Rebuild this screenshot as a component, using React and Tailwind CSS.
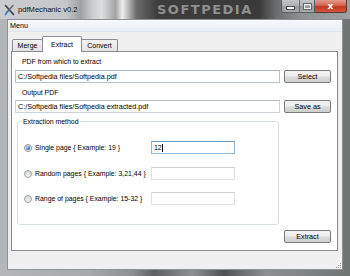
export default function App() {
  const btn =
    "h-[13px] w-[47px] flex items-center justify-center rounded-[2px] border border-[#7b7b7b] bg-[linear-gradient(180deg,#f4f4f4_0%,#ececec_48%,#dcdcdc_52%,#cfcfcf_100%)] text-[7.2px] leading-none text-black";
  return (
    <div className="w-[350px] h-[276px] overflow-hidden flex flex-col font-['Liberation_Sans',Arial,sans-serif] text-black bg-[linear-gradient(90deg,#b3b7ba_0%,#a6aaad_25%,#8c9093_38%,#5d6062_44%,#8e9294_55%,#505355_64%,#8d9093_76%,#6e7472_100%)]">
      {/* title bar */}
      <div className="h-[19px] shrink-0 flex items-start relative bg-[linear-gradient(90deg,#c9cdd0_0%,#c3c7ca_19%,#9ea2a5_23%,#c6c9cb_26%,#dcdedf_29%,#a3a3a3_33%,#eeeeee_35%,#6a6a6a_39%,#3d3d3d_45%,#3a3a3a_74%,#6b6d6e_79%,#8e9193_86%,#9ea1a3_100%)]">
        <div className="w-[18px] h-[19px] flex items-center justify-center">
          <svg width="11" height="12" viewBox="0 0 11 12">
            <path d="M1.5 1.5 L9.5 10.5" stroke="#3a3f46" strokeWidth="1.6" strokeLinecap="round" />
            <path d="M9 1.5 L3.5 7.5" stroke="#5c6670" strokeWidth="1.4" strokeLinecap="round" />
            <path d="M3.5 7.5 L1.5 10.5" stroke="#2b7fd0" strokeWidth="1.6" strokeLinecap="round" />
          </svg>
        </div>
        <span className="text-[7.6px] leading-[19px] text-[#111]">pdfMechanic v0.2</span>
        <span className="absolute left-[157px] top-[2px] text-[13px] leading-[15px] font-bold tracking-[1.5px] text-[#8f8f8f] font-['DejaVu_Sans',sans-serif]">
          SOFTPEDIA
        </span>
        <div className="ml-auto mr-[3px] flex items-start">
          <div className="h-[13px] w-[34px] flex rounded-bl-[3px] border border-t-0 border-[#5a5e61] bg-[linear-gradient(180deg,#c1c5c8_0%,#aeb2b5_50%,#94989b_51%,#a6aaad_100%)]">
            <div className="w-[18px] h-full flex items-center justify-center border-r border-[#6a6e71]">
              <div className="w-[7px] h-[2px] bg-white mt-[4px] outline outline-1 outline-[#555]" />
            </div>
            <div className="flex-1 h-full flex items-center justify-center">
              <div className="w-[7px] h-[5px] border border-[#eee] outline outline-1 outline-[#666]" />
            </div>
          </div>
          <div className="h-[13px] w-[32px] flex items-center justify-center rounded-br-[3px] border border-l-0 border-t-0 border-[#5a3a35] bg-[linear-gradient(180deg,#e59a8c_0%,#d66350_45%,#c2361f_55%,#d5553c_100%)]">
            <span className="text-[9px] leading-none font-bold text-white font-['DejaVu_Sans',sans-serif]">x</span>
          </div>
        </div>
      </div>

      {/* client */}
      <div className="relative mx-[7px] h-[251px] shrink-0 flex flex-col bg-[#f0f0f0] border border-[#8e9297]">
        {/* menu bar */}
        <div className="h-[12px] shrink-0 flex items-center bg-[linear-gradient(180deg,#f6f8fc_0%,#e9eef6_100%)] border-b border-[#dfe5ee]">
          <span className="pl-[2px] text-[7.2px] leading-none">Menu</span>
        </div>

        {/* tabs */}
        <div className="mt-[4px] ml-[4px] h-[15px] flex items-end relative z-10">
          <div className="h-[12px] w-[31px] flex items-center justify-center border border-b-0 border-[#898c95] rounded-t-[2px] bg-[linear-gradient(180deg,#f3f3f3_0%,#e3e3e3_100%)] text-[7px] leading-none">
            Merge
          </div>
          <div className="h-[16px] w-[40px] -mb-[1px] -ml-px flex items-center justify-center border border-b-0 border-[#898c95] rounded-t-[2px] bg-white text-[7px] leading-none">
            Extract
          </div>
          <div className="h-[12px] w-[37px] -ml-px flex items-center justify-center border border-b-0 border-[#898c95] rounded-t-[2px] bg-[linear-gradient(180deg,#f3f3f3_0%,#e3e3e3_100%)] text-[7px] leading-none">
            Convert
          </div>
        </div>

        {/* panel */}
        <div className="ml-[3px] w-[327px] h-[200px] flex flex-col bg-white border border-[#898c95] text-[6.9px] leading-[9px]">
          <div className="mt-[5px] pl-[10px]">PDF from which to extract</div>
          <div className="mt-[4px] flex items-center">
            <div className="ml-[3px] w-[265px] h-[13px] flex items-center pl-[2px] text-[7.2px] border border-[#b4c4d6] border-t-[#a6b6ca]">
              C:/Softpedia files/Softpedia.pdf
            </div>
            <div className={"ml-[4px] " + btn}>Select</div>
          </div>
          <div className="mt-[5px] pl-[10px]">Output PDF</div>
          <div className="mt-[3px] flex items-center">
            <div className="ml-[3px] w-[265px] h-[13px] flex items-center pl-[2px] text-[7.2px] border border-[#c9d3de] border-t-[#b3bcc6]">
              C:/Softpedia files/Softpedia extracted.pdf
            </div>
            <div className={"ml-[4px] " + btn}>Save as</div>
          </div>

          <fieldset className="mt-[4px] ml-[5px] w-[262px] h-[108px] border border-[#d5dfe5] rounded-[3px] px-0 pb-0">
            <legend className="ml-[4px] px-[1px] leading-[9px]">Extraction method</legend>
            <div className="mt-[15px] grid grid-cols-[133px_84px] gap-y-[13px]">
              <div className="flex items-center h-[13px] pl-[6px]">
                <span className="w-[8px] h-[8px] rounded-full border border-[#8b8f93] bg-[linear-gradient(180deg,#e6e6e6,#f8f8f8)] flex items-center justify-center">
                  <span className="w-[4px] h-[4px] rounded-full bg-[radial-gradient(circle_at_35%_35%,#a9d4ff_0%,#2f6fbd_60%,#1c4f93_100%)]" />
                </span>
                <span className="ml-[3px] whitespace-nowrap">Single page { "{" } Example: 19 { "}" }</span>
              </div>
              <div className="h-[13px] flex items-center pl-[2px] border border-[#8fb6dc] border-t-[#6e9cc8]">
                <span>12</span>
                <span className="w-px h-[8px] bg-black" />
              </div>
              <div className="flex items-center h-[13px] pl-[6px]">
                <span className="w-[8px] h-[8px] rounded-full border border-[#9a9ea2] bg-[linear-gradient(180deg,#d9d9d9,#f6f6f6)]" />
                <span className="ml-[3px] whitespace-nowrap">Random pages { "{" } Example: 3,21,44 { "}" }</span>
              </div>
              <div className="h-[13px] border border-[#dde1e5] border-t-[#c9cdd1]" />
              <div className="flex items-center h-[13px] pl-[6px] -mt-px">
                <span className="w-[8px] h-[8px] rounded-full border border-[#9a9ea2] bg-[linear-gradient(180deg,#d9d9d9,#f6f6f6)]" />
                <span className="ml-[3px] whitespace-nowrap">Range of pages { "{" } Example: 15-32 { "}" }</span>
              </div>
              <div className="h-[13px] -mt-px border border-[#dde1e5] border-t-[#c9cdd1]" />
            </div>
          </fieldset>

          <div className={"mt-[5px] self-end mr-[6px] " + btn}>Extract</div>
        </div>

        {/* resize grip */}
        <div className="absolute right-[1px] bottom-[1px] grid grid-cols-3 gap-[1px]">
          <span className="w-px h-px" />
          <span className="w-px h-px" />
          <span className="w-px h-px bg-[#9a9a9a]" />
          <span className="w-px h-px" />
          <span className="w-px h-px bg-[#9a9a9a]" />
          <span className="w-px h-px bg-[#9a9a9a]" />
          <span className="w-px h-px bg-[#9a9a9a]" />
          <span className="w-px h-px bg-[#9a9a9a]" />
          <span className="w-px h-px bg-[#9a9a9a]" />
        </div>
      </div>
    </div>
  );
}
